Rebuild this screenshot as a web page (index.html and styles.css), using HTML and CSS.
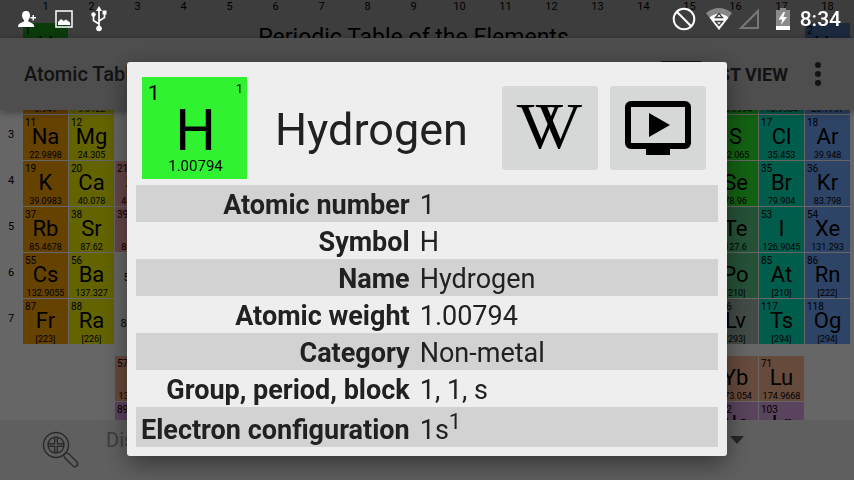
FILE: index.html
```
<!DOCTYPE html>
<html lang="en">
<head>
    <meta charset="UTF-8">
    <meta name="viewport" content="width=device-width, initial-scale=1.0">
    <title>Atomic Table</title>
    <link rel="stylesheet" href="styles.css">
</head>
<body>

    <div class="screen">
        <main class="chart" id="chart">
            <h2 class="chart-title">Periodic Table of the Elements</h2>
        </main>

        <header class="app-bar">
            <h1>Atomic Table</h1>
            <button class="view-button" type="button">
                <svg width="40" height="26" viewBox="0 0 40 26"><path d="M0 0h40v4H0zM0 11h40v4H0zM0 22h40v4H0z"/></svg>
                LIST VIEW
            </button>
            <button class="more-button" type="button" aria-label="More options">
                <svg width="8" height="26" viewBox="0 0 8 26"><circle cx="4" cy="4" r="3"/><circle cx="4" cy="13" r="3"/><circle cx="4" cy="22" r="3"/></svg>
            </button>
        </header>

        <footer class="bottom-bar">
            <svg class="zoom-icon" width="38" height="38" viewBox="0 0 38 38" fill="none" stroke="#6a6a6a" stroke-width="1.4">
                <circle cx="14" cy="14" r="12.5"/>
                <circle cx="14" cy="14" r="8"/>
                <path d="M12.7 6v6.700H6M15.300 6v6.700H22M12.700 22v-6.700H6M15.300 22v-6.700H22"/>
                <path d="M21.500 24l2.500-2.500 3 1.500 8 8c2 3-1.500 6-4 4l-8-8z"/>
            </svg>
            <div class="select-wrap">
                <select aria-label="Display">
                    <option>Display</option>
                </select>
                <svg width="14" height="8" viewBox="0 0 14 8"><path d="M0 0h14L7 8z"/></svg>
            </div>
        </footer>
    </div>

    <div class="overlay">
        <section class="dialog" role="dialog" aria-label="Hydrogen">
            <div class="dialog-head">
                <div class="tile">
                    <div class="tile-top"><span class="tile-number">1</span><span class="tile-shell">1</span></div>
                    <div class="tile-symbol">H</div>
                    <div class="tile-weight">1.00794</div>
                </div>
                <h2>Hydrogen</h2>
                <button class="link-button" type="button" aria-label="Wikipedia">
                    <svg width="72" height="60" viewBox="0 0 72 60"><text x="2" y="50">V</text><text x="21" y="50">V</text></svg>
                </button>
                <button class="link-button" type="button" aria-label="Video">
                    <svg width="66" height="54" viewBox="0 0 66 54">
                        <rect x="3" y="3" width="60" height="42" rx="3" fill="none" stroke="#000" stroke-width="6"/>
                        <path d="M21 47h24v7H21zM24 12l21 12-21 12z"/>
                    </svg>
                </button>
            </div>
            <table>
                <tr><th scope="row">Atomic number</th><td>1</td></tr>
                <tr><th scope="row">Symbol</th><td>H</td></tr>
                <tr><th scope="row">Name</th><td>Hydrogen</td></tr>
                <tr><th scope="row">Atomic weight</th><td>1.00794</td></tr>
                <tr><th scope="row">Category</th><td>Non-metal</td></tr>
                <tr><th scope="row">Group, period, block</th><td>1, 1, s</td></tr>
                <tr><th scope="row">Electron configuration</th><td>1s<sup>1</sup></td></tr>
            </table>
        </section>
    </div>

    <div class="status-bar">
        <div class="status-left">
            <svg width="19" height="18" viewBox="0 0 19 18"><path d="M8 1c3 0 4 2 4 4.500S11 9 10.300 10v1.500c2 1 6 1.500 6 5.500H0c0-4 4-4.500 6-5.500V10C5 9 4 8 4 5.500S5 1 8 1zM14.500 5h1.500v2h2v1.500h-2v2h-1.500v-2h-2V7h2z"/></svg>
            <svg width="18" height="18" viewBox="0 0 18 18"><path d="M1 1h16v16H1z" fill="none" stroke="#fff" stroke-width="1.500"/><path d="M3 15v-3l3-3 2.500 2L11 9.500l4 3V15z"/></svg>
            <svg width="16" height="26" viewBox="0 0 16 26">
                <path d="M8 4v18M8 18l-5.500-3.500V10M8 15l5.500-3.500V7" fill="none" stroke="#fff" stroke-width="1.700"/>
                <path d="M8 0l3 5H5zM11.500 4.500h4v4h-4z"/><circle cx="2.500" cy="8.500" r="2.200"/><circle cx="8" cy="22.500" r="2.800"/>
            </svg>
        </div>
        <div class="status-right">
            <svg width="24" height="24" viewBox="0 0 24 24"><path d="M4.300 4.300l15.400 15.400" stroke="#fff" stroke-width="2"/><circle cx="12" cy="12" r="10.300" fill="none" stroke="#fff" stroke-width="2"/></svg>
            <svg width="26" height="22" viewBox="0 0 26 22">
                <path d="M0 5Q13-5 26 5L13 22z" fill="#868686"/><path d="M3.500 9.500Q13 2 22.500 9.500L13 22z"/>
                <path d="M9.500 9.500L13 5.500l3.500 4zM9.500 13.500L13 17.500l3.500-4z" fill="none" stroke="#3e3e3e" stroke-width="1.300"/>
            </svg>
            <svg class="signal" width="22" height="22" viewBox="0 0 22 22"><path d="M3 20L20 3v17z" fill="none" stroke="#777" stroke-width="2"/></svg>
            <svg width="14" height="22" viewBox="0 0 14 22"><path d="M4 0h6v2h4v16H0V2h4z" fill="#8a8a8a"/><path d="M0 18h14v4H0zM7.500 4L2.500 11.500h3.700L5 17l6-8H7.300L9 4z"/></svg>
            <span class="clock">8:34</span>
        </div>
    </div>

    <script src="script.js"></script>
</body>
</html>
```
FILE: styles.css
```
* {
    box-sizing: border-box;
}
body {
    font-family: Roboto, sans-serif;
    margin: 0;
    color: #000;
}
h1, h2 {
    margin: 0;
}
button {
    font-family: inherit;
    border: none;
    background: none;
    padding: 0;
    cursor: pointer;
}
svg {
    display: block;
    flex: none;
}
.screen {
    height: 100vh;
    display: flex;
    flex-direction: column;
    position: relative;
    background-color: #fff;
}

/* periodic table */
.chart {
    flex: 1;
    min-height: 0;
    overflow: hidden;
    display: grid;
    grid-template-columns: 22px repeat(18, 1fr);
    grid-template-rows: 22px repeat(7, 45px) 10px repeat(2, 45px);
    gap: 1px;
    padding-right: 4px;
}
.chart-title {
    grid-column: 5 / 16;
    grid-row: 2;
    text-align: center;
    font-size: 23px;
    line-height: 30px;
    font-weight: 400;
}
.group {
    font-size: 11px;
    line-height: 14px;
    text-align: center;
}
.period, .range {
    font-size: 11px;
    line-height: 14px;
    text-align: center;
    padding-top: 13px;
}
.range {
    padding-top: 18px;
}
.cell {
    padding-top: 3px;
    text-align: center;
    white-space: nowrap;
    min-width: 0;
}
.number {
    font-size: 10px;
    line-height: 10px;
    text-align: left;
    padding-left: 2px;
}
.symbol {
    font-size: 22px;
    line-height: 16px;
    margin-top: 1px;
}
.weight {
    font-size: 9px;
    line-height: 10px;
    margin-top: 5px;
}
.alkali { background-color: #ffa500; }
.alkaline { background-color: #f8f800; }
.transition { background-color: #ffb0b4; }
.nonmetal { background-color: #30f230; }
.metalloid { background-color: #5ccd8a; }
.halogen { background-color: #00e6bc; }
.noble { background-color: #73aaff; }
.unknown { background-color: #a8bcb0; }
.lanthanide { background-color: #ffb996; }
.actinide { background-color: #e0a8e8; }

/* bars */
.app-bar {
    position: absolute;
    top: 38px;
    left: 0;
    right: 0;
    height: 72px;
    display: flex;
    align-items: center;
    padding: 0 32px 0 24px;
    background-color: #c2c2c2;
    box-shadow: 0 2px 8px rgba(0, 0, 0, 0.4);
}
.app-bar h1 {
    flex: 1;
    font-size: 20px;
    line-height: 24px;
    font-weight: 500;
}
.view-button {
    display: flex;
    align-items: center;
    gap: 3px;
    font-size: 18px;
    font-weight: 700;
    margin-right: 26px;
}
.app-bar button, .app-bar h1 {
    color: #303030;
    fill: #303030;
}
.bottom-bar {
    height: 60px;
    display: flex;
    align-items: flex-start;
    gap: 26px;
    padding: 10px 110px 0 42px;
    background-color: #eee;
}
.zoom-icon {
    margin-top: 1px;
}
.select-wrap {
    flex: 1;
    display: grid;
    align-items: center;
}
.select-wrap select {
    grid-area: 1 / 1;
    appearance: none;
    border: none;
    padding: 0;
    background: none;
    font-family: inherit;
    font-size: 20px;
    line-height: 20px;
    color: #999;
}
.select-wrap svg {
    grid-area: 1 / 1;
    justify-self: end;
    fill: #606060;
}

/* element details */
.overlay {
    position: fixed;
    inset: 0;
    padding-top: 38px;
    display: flex;
    align-items: center;
    justify-content: center;
    background-color: rgba(0, 0, 0, 0.6);
}
.dialog {
    width: 90%;
    max-width: 600px;
    padding: 15px 9px 9px;
    background-color: #eee;
    border-radius: 3px;
    color: #212121;
    box-shadow: 0 8px 26px rgba(0, 0, 0, 0.45);
}
.dialog-head {
    display: flex;
    align-items: center;
    gap: 12px;
    padding: 0 12px 0 6px;
    margin-bottom: 6px;
}
.dialog-head h2 {
    flex: 1;
    padding: 4px 0 0 16px;
    font-size: 45px;
    line-height: 54px;
    font-weight: 400;
}
.tile {
    width: 105px;
    padding: 6px 4px 4px 6px;
    background-color: #30f230;
    color: #000;
    text-align: center;
}
.tile-top {
    display: flex;
    justify-content: space-between;
}
.tile-number {
    font-size: 21px;
    line-height: 20px;
}
.tile-shell {
    font-size: 13px;
    line-height: 12px;
}
.tile-symbol {
    font-size: 57px;
    line-height: 42px;
    margin-top: 7px;
}
.tile-weight {
    font-size: 15px;
    line-height: 18px;
    margin-top: 5px;
}
.link-button {
    width: 96px;
    height: 84px;
    display: flex;
    align-items: center;
    justify-content: center;
    background-color: #d6d8d7;
    border-radius: 3px;
}
.link-button text {
    font-family: "Liberation Serif", serif;
    font-size: 66px;
}
table {
    width: 100%;
    border-collapse: collapse;
    font-size: 27px;
    line-height: 33px;
}
tr:nth-child(odd) {
    background-color: #d2d2d2;
}
th, td {
    padding: 4px 5px 0;
    white-space: nowrap;
    vertical-align: baseline;
}
th {
    text-align: right;
    font-weight: 700;
}
td {
    width: 100%;
}
tr:last-child td {
    padding-top: 7px;
}
sup {
    font-size: 22px;
    line-height: 1px;
}

/* status bar */
.status-bar {
    position: fixed;
    top: 0;
    left: 0;
    right: 0;
    height: 38px;
    display: flex;
    justify-content: space-between;
    align-items: center;
    padding: 0 13px 0 18px;
    background-color: rgba(0, 0, 0, 0.4);
    color: #fff;
    fill: #fff;
}
.status-left, .status-right {
    display: flex;
    align-items: center;
}
.status-left {
    gap: 18px;
}
.status-right {
    gap: 10px;
}
.signal {
    margin: 0 6px 0 -4px;
}
.clock {
    font-size: 21px;
    line-height: 24px;
    font-weight: 500;
}
```
FILE: script.js
```
var chart = document.getElementById("chart");

// number, symbol, weight, category, group, row
var elements = [
    [1, "H", "1.00794", "nonmetal", 1, 1],
    [2, "He", "4.0026", "noble", 18, 1],
    [3, "Li", "6.941", "alkali", 1, 2],
    [4, "Be", "9.0122", "alkaline", 2, 2],
    [8, "O", "15.9994", "nonmetal", 16, 2],
    [9, "F", "18.9984", "halogen", 17, 2],
    [10, "Ne", "20.1797", "noble", 18, 2],
    [11, "Na", "22.9898", "alkali", 1, 3],
    [12, "Mg", "24.305", "alkaline", 2, 3],
    [16, "S", "32.065", "nonmetal", 16, 3],
    [17, "Cl", "35.453", "halogen", 17, 3],
    [18, "Ar", "39.948", "noble", 18, 3],
    [19, "K", "39.0983", "alkali", 1, 4],
    [20, "Ca", "40.078", "alkaline", 2, 4],
    [21, "Sc", "44.9559", "transition", 3, 4],
    [34, "Se", "78.96", "nonmetal", 16, 4],
    [35, "Br", "79.904", "halogen", 17, 4],
    [36, "Kr", "83.798", "noble", 18, 4],
    [37, "Rb", "85.4678", "alkali", 1, 5],
    [38, "Sr", "87.62", "alkaline", 2, 5],
    [39, "Y", "88.9059", "transition", 3, 5],
    [52, "Te", "127.6", "metalloid", 16, 5],
    [53, "I", "126.9045", "halogen", 17, 5],
    [54, "Xe", "131.293", "noble", 18, 5],
    [55, "Cs", "132.9055", "alkali", 1, 6],
    [56, "Ba", "137.327", "alkaline", 2, 6],
    [84, "Po", "[210]", "metalloid", 16, 6],
    [85, "At", "[210]", "halogen", 17, 6],
    [86, "Rn", "[222]", "noble", 18, 6],
    [87, "Fr", "[223]", "alkali", 1, 7],
    [88, "Ra", "[226]", "alkaline", 2, 7],
    [116, "Lv", "[293]", "unknown", 16, 7],
    [117, "Ts", "[294]", "halogen", 17, 7],
    [118, "Og", "[294]", "noble", 18, 7],
    [57, "La", "138.9055", "lanthanide", 3, 9],
    [70, "Yb", "173.054", "lanthanide", 16, 9],
    [71, "Lu", "174.9668", "lanthanide", 17, 9],
    [89, "Ac", "[227]", "actinide", 3, 10],
    [102, "No", "[259]", "actinide", 16, 10],
    [103, "Lr", "[262]", "actinide", 17, 10]
];

function addItem(className, html, group, row) {
    var item = document.createElement("div");
    item.className = className;
    item.innerHTML = html;
    item.style.gridColumn = group + 1;
    item.style.gridRow = row + 1;
    chart.appendChild(item);
}

for (var g = 1; g <= 18; g++) {
    addItem("group", g, g, 0);
}
for (var p = 1; p <= 7; p++) {
    addItem("period", p, 0, p);
}
addItem("range", "57-71", 3, 6);
addItem("range", "89-103", 3, 7);

elements.forEach(function(e) {
    addItem("cell " + e[3],
        '<div class="number">' + e[0] + '</div>' +
        '<div class="symbol">' + e[1] + '</div>' +
        '<div class="weight">' + e[2] + '</div>', e[4], e[5]);
});
```
